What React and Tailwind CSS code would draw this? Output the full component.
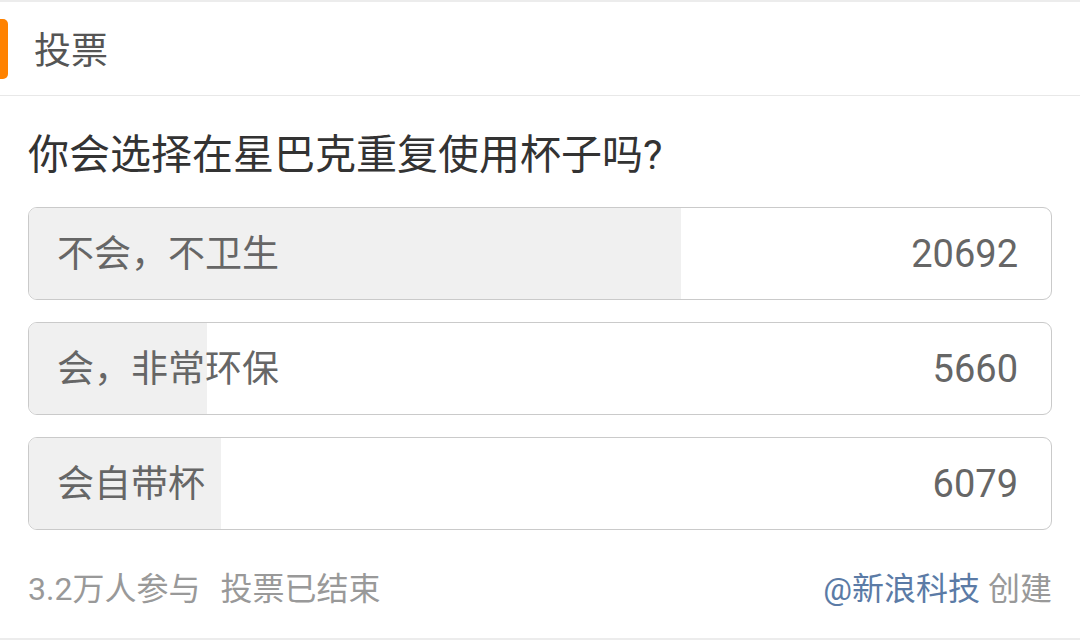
const options = [
  { label: '不会，不卫生', count: 20692 },
  { label: '会，非常环保', count: 5660 },
  { label: '会自带杯', count: 6079 },
];

const total = options.reduce((s, o) => s + o.count, 0);

const Option = ({ label, count }) => (
  <div className="relative h-[93px] rounded-[9px] border border-[#cacaca] overflow-hidden bg-white">
    <div className="absolute left-0 top-0 bottom-0 bg-[#f0f0f0]" style={{ width: `${(count / total) * 100}%` }} />
    <div className="relative h-full flex items-center justify-between pl-[28px] pr-[33px] pt-[2px] text-[37px] text-[#666666]">
      <span>{label}</span>
      <span className="text-[38px]">{count}</span>
    </div>
  </div>
);

export default function App() {
  return (
    <div
      className="w-[1080px] h-[640px] bg-white border-t-2 border-b-2 border-[#ececec] overflow-hidden"
      style={{ fontFamily: 'Roboto, "Noto Sans CJK SC", "Noto Sans", sans-serif' }}
    >
      <div className="h-[94px] flex items-center border-b border-[#e8e8e8]">
        <div className="w-[8px] h-[60px] rounded-r-[5px] bg-[#ff8200]" />
        <span className="ml-[26px] pt-[5px] text-[37px] text-[#555555] leading-none">投票</span>
      </div>

      <div className="px-[28px]">
        <p className="mt-[39px] text-[41px] leading-[40px] text-[#333333]">你会选择在星巴克重复使用杯子吗?</p>

        <div className="mt-[32px] flex flex-col gap-[22px]">
          {options.map(o => <Option key={o.label} {...o} />)}
        </div>

        <div className="mt-[39px] h-[40px] flex items-center justify-between text-[32px] leading-[40px]">
          <p className="text-[#999999]">3.2万人参与<span className="ml-[20px]">投票已结束</span></p>
          <p className="text-[#999999]"><span className="text-[#5b7ba6]">@新浪科技</span> 创建</p>
        </div>
      </div>
    </div>
  );
}
